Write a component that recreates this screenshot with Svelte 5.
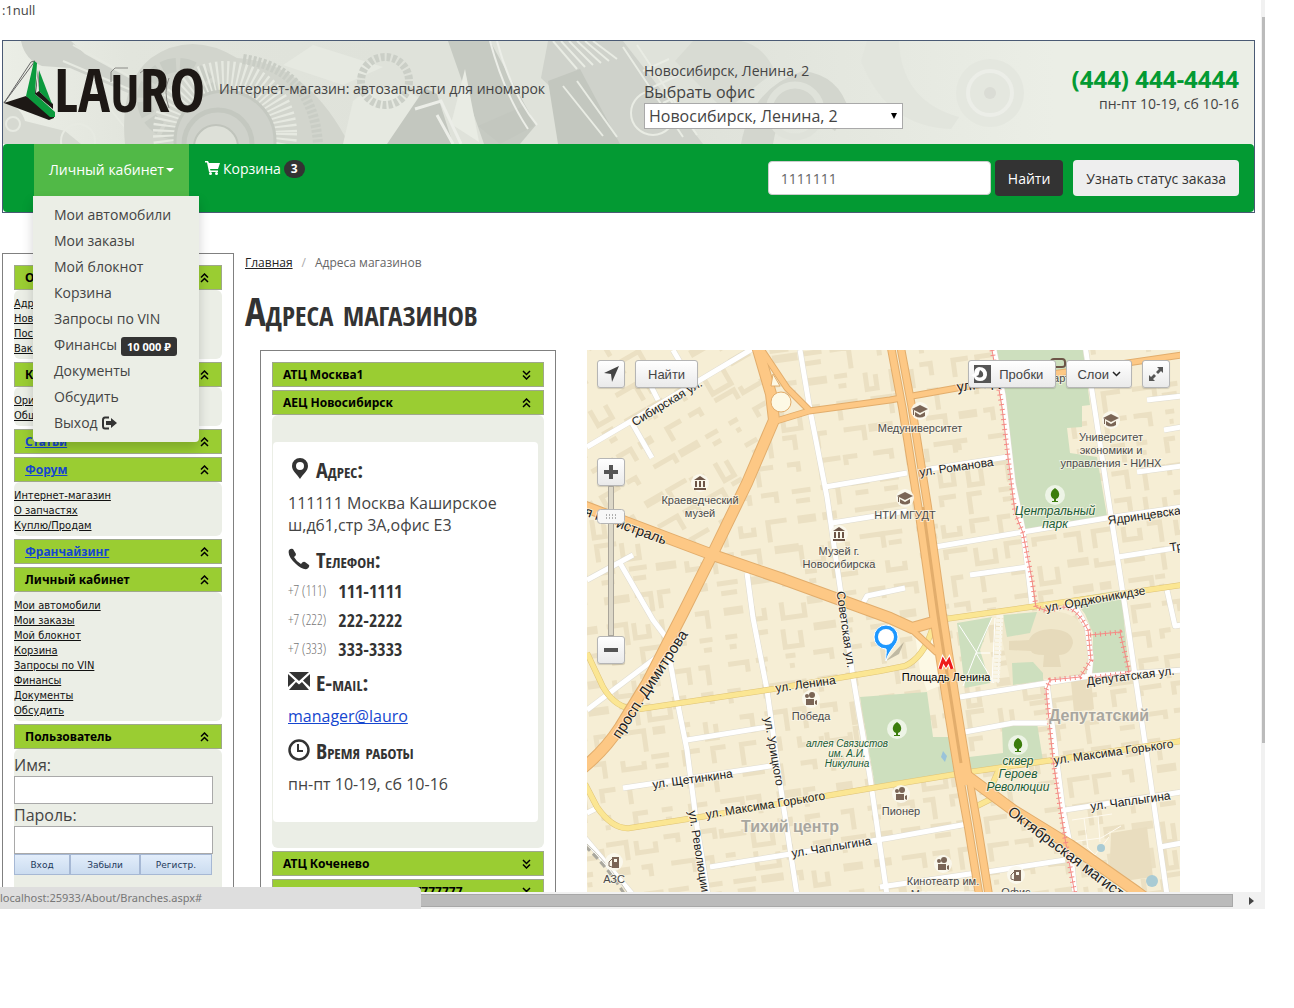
<script lang="ts">
    type Link = { title: string; isLink?: boolean; items: string[] };

    const cabinet: string[] = ["Мои автомобили", "Мои заказы", "Мой блокнот", "Корзина", "Запросы по VIN", "Финансы", "Документы", "Обсудить"];

    const sections: Link[] = [
        { title: "О компании", items: ["Адреса магазинов", "Новости", "Поставщикам", "Вакансии"] },
        { title: "Каталоги", items: ["Оригинальные", "Общий каталог"] },
        { title: "Статьи", isLink: true, items: [] },
        { title: "Форум", isLink: true, items: ["Интернет-магазин", "О запчастях", "Куплю/Продам"] },
        { title: "Франчайзинг", isLink: true, items: [] },
        { title: "Личный кабинет", items: cabinet },
    ];

    const phones = [
        ["+7 (111)", "111-1111"],
        ["+7 (222)", "222-2222"],
        ["+7 (333)", "333-3333"],
    ];

    const whiteRoads: string[] = [
        "M0 97L46 70L160 2L172-5", "M86 0L93 12", "M61 30L71 50", "M45 73L65 108",
        "M213 0L223 60L240 147L253 237L266 327L283 427L300 545",
        "M238 137L320 123", "M330 121L420 107", "M245 173L320 161", "M276 253L280 246L318 238",
        "M160 223L166 268L180 340L193 433L210 545", "M81 300L90 350L100 400L110 477L121 545",
        "M33 213L66 270L81 290", "M0 230L46 205", "M0 360L70 307", "M100 390L180 377", "M36 438L190 415",
        "M123 517L303 488L386 473", "M-4 486L46 545", "M0 463L12 457",
        "M407 0L416 45L426 133L436 180L445 255", "M498-5L520 140L540 270L560 407L580 545",
        "M348 197L436 182L520 168L595 157", "M383 225L440 217", "M531 207L595 197", "M560 50L595 46",
        "M577 80L595 77", "M550 122L595 116", "M580 240L588 276L595 275",
        "M373 347L460 333L503 326L595 320", "M378 382L426 373L460 373", "M460 333L476 460L483 493L488 545",
        "M478 460L595 442", "M393 523L478 510", "M573 497L595 493", "M293 537L396 522",
        "M478 256L490 260L500 277L504 308L502 326",
    ];

    const yellowRoads: string[] = [
        "M0 303L16 337Q30 361 53 359L180 340L293 321L318 316Q336 308 345 280",
        "M351 270L443 257L595 235",
        "M-2 434L10 457Q26 480 43 478L126 465L303 435L376 423L466 410L595 391",
        "M413 417L406 433", "M388 457L404 449",
    ];

    const orangeRoads: string[] = [
        "M170-4L184 44L187 70L160 133L126 203L96 263L60 333L33 377Q18 400-4 418",
        "M-4 156L126 205L193 228L303 268L325 278L346 272",
        "M376 423L426 460L483 495L550 542L593 574",
    ];

    const thinOrange: string[] = ["M172-4L200 38L222 60", "M186 72L222 61L303 50L370 38L595 5", "M322 277L350 303"];

    const parks: string[] = [
        "408,0 496,0 503,55 495,56 495,77 480,78 483,103 510,107 520,166 436,180",
        "273,347 340,342 346,387 366,387 371,423 288,436",
        "415,377 450,373 456,411 381,422 382,407 416,403",
        "370,273 405,267 393,300 403,333 378,338",
        "416,265 450,262 443,283 420,287", "425,313 446,312 456,323 456,331 426,335",
        "486,248 534,240 542,323 506,325 506,283 498,264",
    ];

    const tram: string[] = [
        "M405 0L415 57L421 107L428 163L436 183L445 230L449 257L460 261L476 257Q490 257 501 280L504 310L493 327L463 330L459 340L466 410L476 477L488 545",
        "M503 285L533 282L541 317L542 323L503 328",
    ];

    // [text, x, y, angle, size]
    const streets: [string, number, number, number, number][] = [
        ["Сибирская ул.", 82, 56, -31, 12],
        ["просп. Димитрова", 67, 337, -57, 15],
        ["я магистраль", 37, 180, 20, 14],
        ["ул. Ленина", 219, 338, -8, 12],
        ["Советская ул.", 255, 280, 82, 12],
        ["ул. Урицкого", 183, 402, 80, 12],
        ["ул. Революции", 108, 502, 81, 12],
        ["ул. Щетинкина", 106, 433, -8, 12],
        ["ул. Максима Горького", 179, 459, -9, 12],
        ["ул. Чаплыгина", 245, 501, -9, 12],
        ["ул. Романова", 370, 121, -8, 12],
        ["ул. Фрунзе", 405, 37, -8, 14],
        ["Ядринцевская", 561, 169, -8, 12],
        ["Трудовая", 609, 198, -8, 12],
        ["ул. Орджоникидзе", 509, 253, -10, 12],
        ["Депутатская ул.", 544, 330, -7, 12],
        ["ул. Максима Горького", 527, 406, -8, 12],
        ["ул. Чаплыгина", 544, 455, -8, 12],
        ["Октябрьская магистраль", 489, 516, 37, 15],
    ];

    // [icon, text lines, x, first baseline]
    const places: [string, string[], number, number][] = [
        ["museum", ["Краеведческий", "музей"], 113, 154],
        ["museum", ["Музей г.", "Новосибирска"], 252, 205],
        ["school", ["Медуниверситет"], 333, 82],
        ["school", ["НТИ МГУДТ"], 318, 169],
        ["school", ["Университет", "экономики и", "управления - НИНХ"], 524, 91],
        ["cinema", ["Победа"], 224, 370],
        ["cinema", ["Пионер"], 314, 465],
        ["cinema", ["Кинотеатр им.", "Маяковского"], 356, 535],
        ["fuel", ["АЗС"], 27, 533],
        ["fuel", ["Офис"], 429, 546],
    ];

    let seed = 11;
    const rnd = () => {
        seed = (seed * 1103515245 + 12345) % 2147483648;
        return seed / 2147483648;
    };

    // city blocks, L and U shaped outlines laid on a loose grid
    const makeBlocks = (x0: number, y0: number, x1: number, y1: number) => {
        let out = "";
        for (let y = y0; y < y1; y += 27) {
            for (let x = x0; x < x1; x += 29) {
                const w = 9 + Math.floor(rnd() * 15);
                const h = 7 + Math.floor(rnd() * 15);
                const px = x + Math.floor(rnd() * 7);
                const kind = rnd();
                out += kind < 0.3 ? `M${px} ${y}h${w}v${h}` : kind < 0.55 ? `M${px} ${y + h}v-${h}h${w}` : kind < 0.7 ? `M${px} ${y}v${h}h${w}v-${h - 3}` : kind < 0.85 ? `M${px} ${y}h${w}M${px + 3} ${y + 10}h${w - 5}` : `M${px} ${y}h${w}v3h-${w}`;
            }
        }
        return out;
    };

    const cityBlocks = makeBlocks(-80, -20, 700, 660);
    const oldBlocks = makeBlocks(-120, 0, 200, 260);

    let office = "Новосибирск, Ленина, 2";
    let query = "1111111";
    let login = "";
    let password = "";
</script>

{#snippet chevrons(down: boolean)}
    <svg class:down viewBox="0 0 9 10" width="9" height="10" aria-hidden="true">
        <path d="M1 4.500L4.500 1L8 4.500M1 9L4.500 5.500L8 9" fill="none" stroke="#000" stroke-width="1.500" />
    </svg>
{/snippet}

<div class="window">
    <div class="page">
        <div class="debug">:1null</div>

        <header>
            <div class="top">
                <svg class="parts" viewBox="0 0 1251 103" preserveAspectRatio="xMinYMin slice" aria-hidden="true">
                    <defs>
                        <linearGradient id="shade">
                            <stop offset="0" stop-color="#ebeee6" />
                            <stop offset="0.1" stop-color="#e2e5dd" />
                            <stop offset="0.3" stop-color="#dfe2da" />
                            <stop offset="0.55" stop-color="#dfe2da" />
                            <stop offset="0.84" stop-color="#ebeee6" />
                        </linearGradient>
                    </defs>
                    <rect width="1251" height="103" fill="url(#shade)" />
                    <!-- shaft and small bearings on the left -->
                    <path d="M18 0h50l14 13 62 34-5 11-72-31-28-2q-17-6-21-25z" fill="#cfd2cb" />
                    <path d="M70 4l72 40M60 20l80 34" stroke="#e6e9e1" stroke-width="2" />
                    <path d="M0 60q18 6 22 20l40 10 16 13H0z" fill="#d6d9d1" />
                    <g fill="none" stroke="#e7eae2" stroke-width="2">
                        <circle cx="10" cy="83" r="7" /><circle cx="75" cy="100" r="17" /><path d="M85 40l50 63" />
                    </g>
                    <!-- bevel gear -->
                    <path d="M122 103q-6-60 26-86q40-28 86 0q70 4 112 86z" fill="#d2d5cd" />
                    <circle cx="175" cy="58" r="34" fill="none" stroke="#c8ccc4" stroke-width="14" stroke-dasharray="14 4" />
                    <circle cx="222" cy="92" r="57" fill="none" stroke="#e6e9e1" stroke-width="30" stroke-dasharray="2 3" />
                    <circle cx="222" cy="100" r="50" fill="#cfd2cb" stroke="#c5c9c1" stroke-width="3" />
                    <circle cx="215" cy="103" r="34" fill="none" stroke="#c4c8c0" stroke-width="5" />
                    <circle cx="213" cy="106" r="22" fill="#dde0d8" stroke="#c0c4bc" stroke-width="2" />
                    <path d="M240 18q70 10 75 85" fill="none" stroke="#c9cdc5" stroke-width="10" stroke-dasharray="3 2" />
                    <!-- casing in the middle -->
                    <path d="M310 4l70 22-40 18-60-20zM350 60q30-30 90 10l-30 33h-70z" fill="#e6e9e1" />
                    <circle cx="382" cy="40" r="24" fill="none" stroke="#cbcfc7" stroke-width="8" stroke-dasharray="4 2" />
                    <path d="M445 0h42l46 84-16 19h-36z" fill="#c6cac2" />
                    <path d="M462 28l14 73-28-18z" fill="#e9ece4" />
                    <path d="M384 103l38-56 12 6 16 50zM475 85l46-20 10 20-34 18z" fill="#c3c7bf" />
                    <path d="M412 68l26-8 20 43M434 74l16 29" fill="none" stroke="#eceee8" stroke-width="3" />
                    <path d="M487 0q14 52 38 88M494 0q14 52 40 84" fill="none" stroke="#eceee8" stroke-width="2" />
                    <path d="M545 0h75l80 103h-92l-70-66z" fill="#cfd2cb" />
                    <path d="M545 40l32-12 40 75h-62z" fill="#c3c7bf" />
                    <g fill="none" stroke="#e9ece4" stroke-width="2">
                        <path d="M550 0l24 28M558 0l24 26M566 0l24 24M574 0l24 22M582 0l24 20M590 0l24 18" />
                        <path d="M620 6l60 90M634 4l60 90M560 45l40 50M574 40l40 56M640 30l26-12M650 46l26-12M660 62l26-12" />
                        <circle cx="650" cy="72" r="22" />
                    </g>
                    <path d="M690 0h48q22 4 34 30l-50 40-50-50z" fill="#d8dbd3" />
                    <path d="M738 103q10-56 62-73q36 4 46 40l-14 20-40-26q-16 4-22 39z" fill="#d3d6ce" />
                    <circle cx="792" cy="70" r="26" fill="none" stroke="#dfe2da" stroke-width="7" />
                    <path d="M858 20q26 66 90 68l8-12q-58-16-60-76h-32z" fill="#e2e5dd" />
                    <circle cx="987" cy="52" r="34" fill="#e4e7df" /><circle cx="987" cy="52" r="22" fill="none" stroke="#eceee8" stroke-width="4" />
                    <circle cx="987" cy="52" r="6" fill="#dadcd5" />
                </svg>
                <a class="logo" href="#home" aria-label="LAURO">
                    <svg viewBox="0 0 204 62" width="204" height="62">
                        <path d="M32 1L1 43M32 1L28 2L1 43" fill="none" stroke="#666" stroke-width="1" />
                        <path d="M1 43L23 36L51 54V58L46 60Z" fill="#1d1815" />
                        <path d="M31 1L34 3L32 34L52 52V57L47 57L23 36Z" fill="#0b9a3d" />
                        <path d="M32 34L35 10L37 32L50 44V49Z" fill="#1d1815" />
                        <path d="M33 33L35 10L36 31Z" fill="#ebeee6" />
                        <path d="M36 10L49 44L36 31Z" fill="#0b9a3d" />
                        <path d="M112 8h13M112 8l-4 4v10M141 10l-4 3M92 20l8 30M166 18q-6 14 0 30" fill="none" stroke="#8a8a86" stroke-width="1" />
                        <text class="logo-text" x="51" y="52">LA<tspan class="logo-u">U</tspan>RO</text>
                    </svg>
                </a>
                <span class="tagline">Интернет-магазин: автозапчасти для иномарок</span>
                <div class="office">
                    <span class="small">Новосибирск, Ленина, 2</span>
                    <label for="office">Выбрать офис</label>
                    <span class="select-wrap">
                        <select id="office" bind:value={office}>
                            <option>Новосибирск, Ленина, 2</option>
                        </select>
                        <svg viewBox="0 0 6 6" width="6" height="6" aria-hidden="true"><path d="M0 0h6L3 6z" /></svg>
                    </span>
                </div>
                <div class="contact">
                    <strong>(444) 444-4444</strong>
                    <span>пн-пт 10-19, сб 10-16</span>
                </div>
            </div>

            <nav>
                <div class="account">
                    <a class="account-link" href="#cabinet">Личный кабинет<i class="caret"></i></a>
                    <ul class="menu">
                        {#each cabinet as item}
                            <li>
                                <a href="#menu">{item}</a>
                                {#if item == "Финансы"}<span class="money">10 000 ₽</span>{/if}
                            </li>
                        {/each}
                        <li>
                            <a href="#logout">Выход<svg viewBox="0 0 16 14" width="16" height="14" aria-hidden="true">
                                    <path d="M8 1.500H4Q2 1.500 2 4V10Q2 12.500 4 12.500H8" fill="none" stroke="#333" stroke-width="2" />
                                    <path d="M5 5h5V2l6 5-6 5V9H5z" fill="#333" />
                                </svg>
                            </a>
                        </li>
                    </ul>
                </div>
                <a class="cart" href="#cart">
                    <svg viewBox="0 0 15 14" width="15" height="14" aria-hidden="true">
                        <path d="M0 0h3l1 2h11l-2 6H5l.5 1.500H13V11H4L2 1.500H0z" fill="#fff" />
                        <circle cx="5.500" cy="12.500" r="1.500" fill="#fff" /><circle cx="11.500" cy="12.500" r="1.500" fill="#fff" />
                    </svg>
                    <span>Корзина</span>
                    <span class="count">3</span>
                </a>
                <form on:submit|preventDefault>
                    <input type="text" aria-label="Поиск" bind:value={query}>
                    <button class="find">Найти</button>
                    <button class="status" type="button">Узнать статус заказа</button>
                </form>
            </nav>
        </header>

        <div class="columns">
            <aside class="box">
                {#each sections as section}
                    <div class="bar">
                        {#if section.isLink}<a href="#section">{section.title}</a>{:else}<span>{section.title}</span>{/if}
                        {@render chevrons(false)}
                    </div>
                    {#if section.items.length}
                        <ul class="links">
                            {#each section.items as item}
                                <li><a href="#item">{item}</a></li>
                            {/each}
                        </ul>
                    {/if}
                {/each}
                <div class="bar"><span>Пользователь</span>{@render chevrons(false)}</div>
                <form class="login" on:submit|preventDefault>
                    <label for="login">Имя:</label>
                    <input id="login" type="text" bind:value={login}>
                    <label for="password">Пароль:</label>
                    <input id="password" type="password" bind:value={password}>
                    <div class="login-buttons">
                        <button>Вход</button>
                        <button type="button">Забыли</button>
                        <button type="button">Регистр.</button>
                    </div>
                </form>
            </aside>

            <main>
                <div class="crumbs"><a href="#home">Главная</a><span class="slash">/</span><span>Адреса магазинов</span></div>
                <h1>Адреса магазинов</h1>
                <div class="shops">
                    <section class="box">
                        <div class="bar"><span>АТЦ Москва1</span>{@render chevrons(true)}</div>
                        <div class="bar"><span>АЕЦ Новосибирск</span>{@render chevrons(false)}</div>
                        <div class="shop">
                            <div class="card">
                                <h2>
                                    <svg viewBox="0 0 22 22" width="22" height="22" aria-hidden="true"><path d="M12 0a8 8 0 0 1 8 8c0 5-5 8-8 13C9 16 4 13 4 8a8 8 0 0 1 8-8zm0 4a4 4 0 1 0 0 8a4 4 0 0 0 0-8z" fill="#333" fill-rule="evenodd" /></svg>
                                    Адрес:
                                </h2>
                                <p>111111 Москва Каширское ш,д61,стр 3А,офис Е3</p>
                                <h2>
                                    <svg viewBox="0 0 22 22" width="22" height="22" aria-hidden="true"><path d="M1 2Q3 0 5 1L8 6Q8 8 6 9Q8 13 13 16Q15 13 17 14L21 17Q22 19 19 21Q14 22 8 16Q-1 8 1 2z" fill="#333" /></svg>
                                    Телефон:
                                </h2>
                                <ul class="phones">
                                    {#each phones as [code, number]}
                                        <li><span>{code}</span><b>{number}</b></li>
                                    {/each}
                                </ul>
                                <h2>
                                    <svg viewBox="0 0 22 22" width="22" height="22" aria-hidden="true"><path d="M1 1H21L11 10zM0 3L7 9.500L0 16zM22 3L15 9.500L22 16zM8 11L11 13.500L14 11L21 19H1z" fill="#333" /></svg>
                                    E-mail:
                                </h2>
                                <p><a href="mailto:manager@lauro">manager@lauro</a></p>
                                <h2>
                                    <svg viewBox="0 0 22 22" width="22" height="22" aria-hidden="true"><circle cx="11" cy="11" r="9.500" fill="none" stroke="#333" stroke-width="2.500" /><path d="M10 5v7h5" fill="none" stroke="#333" stroke-width="2" /></svg>
                                    Время работы
                                </h2>
                                <p>пн-пт 10-19, сб 10-16</p>
                            </div>
                        </div>
                        <div class="bar"><span>АТЦ Коченево</span>{@render chevrons(true)}</div>
                        <div class="bar"><span class="center">7777777</span>{@render chevrons(true)}</div>
                    </section>

                    <div class="map">
                        <svg class="tiles" viewBox="0 0 593 593" preserveAspectRatio="xMinYMin slice">
                            <defs>
                                <clipPath id="oldtown"><path d="M0 0H168L182 70L125 200L0 155z" /></clipPath>
                                <clipPath id="newtown"><path d="M0 157L125 203L186 72L175 0H593V593H0z" /></clipPath>
                            </defs>
                            <rect width="593" height="593" fill="#f6eed5" />
                            <g fill="none" stroke="#ebe0c3" stroke-width="5">
                                <g clip-path="url(#newtown)"><path d={cityBlocks} transform="rotate(-8)" /></g>
                                <g clip-path="url(#oldtown)"><path d={oldBlocks} transform="rotate(-30)" /></g>
                            </g>
                            <g fill="#e9ddbf">
                                <path d="M524 483l36-6 6 50-44 6z" />
                                <path d="M483 322l20-3 4 40-20 3z" />
                            </g>
                            <path d="M411 268l38-6q55-8 52 45l-3 16-40 6-34 6z" fill="#f0e7cb" />
                            {#each parks as points}
                                <polygon {points} fill="#cddfbe" />
                            {/each}
                            <path d="M422 291l20-1q4-10 22-11q22 1 22 14q-3 12-14 12l2 12h-18l1-12q-12 0-13-4l-22-1z" fill="#e6dabb" />
                            <path d="M328 284l22 6 5 45-15 6-7-20z" fill="#fdf9e5" />
                            <path d="M372 275l18 28h13M405 268l-16 35-13 33M389 303l18 30M408 268l-3 65M414 268l-3 65" stroke="#fff" stroke-width="1" fill="none" />
                            <path d="M413 265l-4 68" stroke="#f9f6ea" stroke-width="7" stroke-dasharray="3 1" />
                            <path d="M485 470l40-6M497 468l4 30M511 466l2 26M484 492l30-4l20-12M500 497l8 8l14-18" stroke="#fffbf0" fill="none" />
                            <circle cx="514" cy="498" r="4" fill="#a9cbd4" /><circle cx="565" cy="531" r="6" fill="#a9cbd4" />
                            <path d="M356 401l4 5-2 6-4-5z" fill="#9ac3d9" />
                            <g fill="none" stroke-linejoin="round">
                                {#each whiteRoads as d}<path {d} stroke="#dedbd0" stroke-width="6" />{/each}
                                {#each whiteRoads as d}<path {d} stroke="#fff" stroke-width="5" />{/each}
                                {#each yellowRoads as d}<path {d} stroke="#dfc376" stroke-width="6" />{/each}
                                {#each yellowRoads as d}<path {d} stroke="#fbe693" stroke-width="5" />{/each}
                                {#each orangeRoads as d}<path {d} stroke="#e2ad6c" stroke-width="12" />{/each}
                                {#each thinOrange as d}<path {d} stroke="#e2ad6c" stroke-width="7" />{/each}
                                <path d="M309-2L320 57L336 157L351 265L363 343L376 423L386 477L397 545" stroke="#e2ad6c" stroke-width="18" />
                                {#each orangeRoads as d}<path {d} stroke="#fdc885" stroke-width="10" />{/each}
                                {#each thinOrange as d}<path {d} stroke="#fdc885" stroke-width="5" />{/each}
                                <path d="M309-2L320 57L336 157L351 265L363 343L376 423L386 477L397 545" stroke="#fdc885" stroke-width="16" />
                                <path d="M309-2L320 57L336 157L351 265L363 343L374 413M379 435L386 477L397 545" stroke="#e2ad6c" stroke-width="3" />
                                <path d="M309-2L320 57L336 157M379 435L386 477L397 545" stroke="#f6eed5" stroke-width="1" />
                                {#each tram as d}
                                    <path {d} stroke="#f58a84" stroke-width="1" />
                                    <path {d} stroke="#f58a84" stroke-width="5" stroke-dasharray="1 4" />
                                {/each}
                                <path d="M-2 496Q20 516 38 545" stroke="#aaa89e" stroke-width="3" stroke-dasharray="7 4" />
                                <path d="M-2 492Q22 514 42 545" stroke="#c8c5b8" stroke-width="1" />
                            </g>
                            <path d="M186 24l7 12h-9z" fill="#fdf9e5" stroke="#e2ad6c" />
                            <circle cx="194" cy="52" r="10" fill="#fdf9e5" stroke="#e2ad6c" />

                            <g class="districts">
                                <text x="203" y="482">Тихий центр</text>
                                <text x="512" y="371">Депутатский</text>
                            </g>
                            <g class="streets">
                                {#each streets as [name, x, y, angle, size]}
                                    <text {x} {y} font-size={size} transform="rotate({angle} {x} {y})">{name}</text>
                                {/each}
                            </g>
                            {#each places as [kind, lines, x, y]}
                                <g transform="translate({x} {y - 21})">
                                    <circle r="9" fill="#fbf8ee" opacity="0.9" />
                                    {#if kind == "museum"}
                                        <path d="M-6-3L0-7L6-3zM-5-2h2v6h-2zM-1-2h2v6h-2zM3-2h2v6h-2zM-6 5H6v2H-6z" fill="#6d5547" />
                                    {:else if kind == "school"}
                                        <path d="M-8-2L0-6L8-2L0 2zM-5 1L0 4L5 1V5Q0 8-5 5zM-7-1h1v5h-1z" fill="#7a6556" />
                                    {:else if kind == "cinema"}
                                        <path d="M-5 0h8v6h-8zM4 2l2-1v5l-2-1z" fill="#7a6556" />
                                        <circle cx="-4" cy="-3" r="2" fill="#7a6556" /><circle cx="1" cy="-4" r="3" fill="#7a6556" />
                                    {:else}
                                        <path d="M-2-5h7V6h-7zM0-3v3h3v-3z" fill="#7a6556" fill-rule="evenodd" />
                                        <path d="M-2-3L-5 0v4l3 1" fill="none" stroke="#7a6556" />
                                    {/if}
                                </g>
                                <g class="places">
                                    {#each lines as line, i}<text {x} y={y + i * 13}>{line}</text>{/each}
                                </g>
                            {/each}
                            <path d="M464 16v-4q0-3 3-3h8q3 0 3 3v3q0 2-3 2h-8" fill="none" stroke="#6d5547" stroke-width="2" />
                            <text class="poi" x="470" y="32">Март</text>
                            {#each [[468, 145], [310, 379], [431, 395]] as [x, y]}
                                <g transform="translate({x} {y})">
                                    <circle r="10" fill="#edf4e6" />
                                    <path d="M0-7Q5-4 4 1Q3 4 1 4V6H3V7H-3V6H-1V4Q-3 4-4 1Q-5-4 0-7z" fill="#3c7d0d" />
                                </g>
                            {/each}
                            <g class="green">
                                <text x="468" y="165">Центральный</text><text x="468" y="178">парк</text>
                                <text x="431" y="415">сквер</text><text x="431" y="428">Героев</text><text x="431" y="441">Революции</text>
                            </g>
                            <g class="green alley">
                                <text x="260" y="397">аллея Связистов</text><text x="260" y="407">им. А.И.</text><text x="260" y="417">Никулина</text>
                            </g>
                            <path d="M353 319l3-9 3 5 3-5 3 9" fill="none" stroke="#fff" stroke-width="5" />
                            <path d="M353 319l3-9 3 5 3-5 3 9" fill="none" stroke="#ee1c1c" stroke-width="3" />
                            <text class="metro" x="359" y="331">Площадь Ленина</text>
                            <path d="M299 311L317 292L312 304z" fill="#6f6a58" opacity="0.4" />
                            <path d="M299 275a12 12 0 0 1 12 12c0 8-9 12-12 24c-1-4 1-9 0-12a12 12 0 0 1 0-24z" fill="#1e98ff" stroke="#fff" stroke-width="1" />
                            <circle cx="299" cy="287" r="8" fill="#fff" />
                        </svg>
                        <div class="tools">
                            <button class="square" aria-label="Моё местоположение"><svg viewBox="0 0 16 16" width="16" height="16"><path d="M1 7L16 0L9 16L8 8z" fill="#444" /></svg></button>
                            <button>Найти</button>
                            <button class="jams">
                                <svg viewBox="0 0 20 18" width="20" height="18" aria-hidden="true"><path d="M3 0h17v18H3z" fill="#555" /><path d="M8 2Q16 2 16 10Q15 16 9 16Q4 16 3 12L0 10L3 9Q3 3 8 2z" fill="#fff" /><path d="M9 5Q13 7 12 11Q9 14 5 11Q8 11 8 8z" fill="#555" /></svg>
                                Пробки
                            </button>
                            <button class="layers">Слои <svg viewBox="0 0 9 6" width="9" height="6" aria-hidden="true"><path d="M1 1l3.500 3.500L8 1" fill="none" stroke="#222" stroke-width="1.500" /></svg></button>
                            <button class="square" aria-label="На весь экран"><svg viewBox="0 0 14 14" width="14" height="14"><path d="M14 0v6l-2-2-3 3-2-2 3-3-2-2zM0 14v-6l2 2 3-3 2 2-3 3 2 2z" fill="#555" /></svg></button>
                        </div>
                        <div class="zoom">
                            <button class="square" aria-label="Приблизить"><svg viewBox="0 0 14 14" width="14" height="14"><path d="M5 0h4v5h5v4H9v5H5V9H0V5h5z" fill="#555" /></svg></button>
                            <div class="rail">
                                <svg class="grip" viewBox="0 0 28 15" width="28" height="15" aria-hidden="true">
                                    <rect x="0.500" y="0.500" width="27" height="14" rx="3" fill="#f7f7f7" stroke="#b5b5b5" />
                                    <path d="M9 6h12M9 9h12" stroke="#666" stroke-dasharray="1 2" />
                                </svg>
                            </div>
                            <button class="square" aria-label="Отдалить"><svg viewBox="0 0 14 14" width="14" height="14"><path d="M0 5h14v4H0z" fill="#555" /></svg></button>
                        </div>
                    </div>
                </div>
            </main>
        </div>
    </div>

    <div class="vscroll"><span></span></div>
    <div class="hscroll">
        <span class="thumb"></span>
        <svg viewBox="0 0 5 8" width="5" height="8" aria-hidden="true"><path d="M0 0L5 4L0 8z" fill="#444" /></svg>
    </div>
    <div class="statusbar">localhost:25933/About/Branches.aspx#</div>
</div>

<style>
    :global(body) {
        background: white;
        overflow: hidden;
    }

    .window {
        position: relative;
        display: grid;
        grid-template-columns: 1fr 4px;
        grid-template-rows: 1fr 17px;
        height: calc(100vh - 99px);
        margin-right: 29px;
        overflow: hidden;
        color: #444;
        font: 400 16px/22px "Open Sans", "Noto Sans", sans-serif;
    }

    .page {
        min-width: 0;
        padding: 0 6px 0 2px;
        overflow: hidden;
    }

    .debug {
        height: 40px;
        font-size: 13px;
        line-height: 20px;
    }

    ul {
        margin: 0;
        padding: 0;
        list-style: none;
    }

    button, input, select {
        box-sizing: border-box;
        font-family: inherit;
    }

    header {
        border: 1px solid #4a5a74;
    }

    .top {
        position: relative;
        display: grid;
        grid-template-columns: 216px 425px 1fr auto;
        height: 103px;
        background: #ebeee6;
    }

    .top > :not(.parts) {
        position: relative;
    }

    .parts {
        position: absolute;
        width: 100%;
        height: 100%;
    }

    .logo {
        padding-top: 19px;
    }

    .logo-text {
        font: 700 60px "Open Sans Condensed", "Liberation Sans Narrow", "Open Sans", sans-serif;
        fill: #1d1815;
    }

    .logo-u {
        font-size: 52px;
    }

    .tagline {
        padding-top: 38px;
        font-size: 14px;
        line-height: 20px;
    }

    .office {
        display: flex;
        flex-direction: column;
        align-items: flex-start;
        padding-top: 20px;
    }

    .small {
        font-size: 14px;
        line-height: 20px;
    }

    .select-wrap {
        position: relative;
    }

    .select-wrap svg {
        position: absolute;
        right: 6px;
        top: 10px;
    }

    select {
        appearance: none;
        display: block;
        width: 259px;
        height: 26px;
        padding: 0 4px;
        border: 1px solid #a9a9a9;
        background: white;
        color: #444;
        font-size: 16px;
    }

    .contact {
        display: flex;
        flex-direction: column;
        padding: 24px 15px 0 0;
        text-align: right;
        font-size: 14px;
    }

    .contact strong {
        color: #039a33;
        font-size: 24px;
        line-height: 28px;
        font-weight: 700;
    }

    nav {
        display: flex;
        height: 68px;
        padding: 0 15px 0 31px;
        border-radius: 4px;
        background: #039a33;
        font-size: 14px;
    }

    .account {
        position: relative;
    }

    .account-link {
        display: flex;
        align-items: center;
        gap: 2px;
        height: 52px;
        padding: 0 15px;
        background: #51b947;
        color: white;
        text-decoration: none;
    }

    .caret {
        border: 4px solid transparent;
        border-top-color: white;
        border-bottom: 0;
    }

    .menu {
        position: absolute;
        z-index: 5;
        top: 52px;
        left: -1px;
        width: 166px;
        box-sizing: border-box;
        padding: 6px 0 6px 21px;
        border-radius: 0 0 4px 4px;
        background: #ebeee6;
        box-shadow: 0 6px 12px rgba(0, 0, 0, .18);
        white-space: nowrap;
    }

    .menu li {
        display: flex;
        align-items: center;
        gap: 4px;
        height: 26px;
    }

    .menu a {
        color: #444;
        text-decoration: none;
    }

    .menu svg {
        margin-left: 3px;
        vertical-align: -2px;
    }

    .money {
        margin-top: 2px;
        padding: 0 6px;
        border-radius: 3px;
        background: #333;
        color: white;
        font-size: 11px;
        line-height: 19px;
        font-weight: 700;
    }

    .cart {
        display: flex;
        align-items: center;
        gap: 3px;
        height: 50px;
        padding-left: 16px;
        color: white;
        text-decoration: none;
    }

    .cart svg {
        margin-bottom: 3px;
    }

    .count {
        padding: 0 7px;
        border-radius: 10px;
        background: #333;
        font-size: 12px;
        line-height: 18px;
        font-weight: 700;
    }

    nav form {
        display: flex;
        align-items: center;
        height: 36px;
        margin: 16px 0 0 auto;
    }

    nav input {
        width: 223px;
        height: 34px;
        padding: 0 12px;
        border: 1px solid #ccc;
        border-radius: 4px;
        color: #666;
        font-size: 14px;
    }

    nav button {
        height: 36px;
        border: 0;
        border-radius: 4px;
        padding: 0 13px;
        font-size: 14px;
    }

    .find {
        margin: 0 10px 0 4px;
        background: #333;
        color: white;
    }

    .status {
        background: #eee;
        color: #333;
    }

    .columns {
        display: grid;
        grid-template-columns: 232px 1fr;
        gap: 11px;
        margin-top: 40px;
    }

    .box {
        padding: 11px;
        border: 1px solid #808080;
    }

    .bar {
        display: flex;
        align-items: center;
        justify-content: space-between;
        box-sizing: border-box;
        height: 25px;
        margin-bottom: 3px;
        padding: 0 12px 0 10px;
        border: 1px solid #9fa88c;
        background: #9acd32;
        color: black;
        font: 700 12px "Noto Sans", "Open Sans", sans-serif;
    }

    .bar a {
        color: #1546cf;
    }

    .center {
        flex: 1;
        text-align: center;
        padding-left: 72px;
    }

    .down {
        transform: rotate(180deg);
    }

    .links, .login, .shop {
        margin: -3px 0 3px;
        border-radius: 6px;
        background: #ebeee6;
    }

    .links {
        padding: 6px 0 3px;
        font: 400 11px/15px "DejaVu Sans Condensed", "Noto Sans", sans-serif;
    }

    .links a {
        color: #111;
    }

    .login {
        padding: 5px 0 40px;
    }

    .login label {
        display: block;
    }

    .login input {
        display: block;
        width: 199px;
        height: 28px;
        border: 1px solid #a9a9a9;
        background: white;
    }

    .login-buttons {
        display: grid;
        grid-template-columns: 56px 70px 72px;
    }

    .login-buttons button {
        height: 21px;
        padding: 0;
        border: 1px solid #a6b8d4;
        background: linear-gradient(#e2edfa, #cbdcf0);
        color: #1e395b;
        font: 400 9px "DejaVu Sans", sans-serif;
    }

    .crumbs {
        color: #666;
        font-size: 12px;
        line-height: 20px;
    }

    .crumbs a {
        color: #222;
    }

    .slash {
        padding: 0 9px;
        color: #aaa;
    }

    h1, h2, .phones {
        color: #333;
        font-family: "Open Sans Condensed", "Liberation Sans Narrow", "Open Sans", sans-serif;
    }

    h1, h2 {
        font-weight: 700;
        font-variant: small-caps;
    }

    h1 {
        margin: 18px 0 19px;
        font-size: 39px;
        line-height: 40px;
    }

    .shops {
        display: grid;
        grid-template-columns: 296px 1fr;
        gap: 31px;
        padding: 0 75px 0 15px;
    }

    .shops .box {
        box-sizing: border-box;
    }

    .shop {
        padding: 27px 6px 26px 1px;
    }

    .card {
        padding: 12px 15px 27px;
        border-radius: 4px;
        background: white;
    }

    h2 {
        display: flex;
        align-items: center;
        gap: 6px;
        margin: 0;
        font-size: 22px;
        line-height: 30px;
    }

    p + h2, ul + h2 {
        margin-top: 8px;
    }

    p {
        margin: 8px 0 0;
    }

    p a {
        color: #1546cf;
    }

    .phones {
        display: grid;
        gap: 9px;
        margin-top: 7px;
        font-size: 18px;
        line-height: 20px;
    }

    .phones li {
        display: flex;
        align-items: center;
        gap: 12px;
        height: 20px;
    }

    .phones span {
        color: #777;
        font-family: "Open Sans Condensed Light", "Open Sans Condensed", "Liberation Sans Narrow", sans-serif;
        font-size: 14px;
        font-weight: 300;
    }

    .map {
        position: relative;
    }

    .tiles {
        display: block;
        width: 100%;
        height: 593px;
        font-family: "Liberation Sans", Arial, sans-serif;
        text-anchor: middle;
    }

    .tiles text {
        paint-order: stroke;
        stroke: #fbf7ea;
        stroke-width: 2;
        stroke-opacity: .7;
    }

    .streets text {
        fill: #222;
    }

    .districts text {
        fill: #a8a69f;
        font-size: 16px;
        font-weight: 700;
    }

    .places text, .poi {
        fill: #4b4b4b;
        font-size: 11px;
    }

    .green text {
        fill: #1a5c37;
        font-size: 12px;
        font-style: italic;
    }

    .alley text {
        font-size: 10px;
    }

    .tiles .metro {
        fill: black;
        font-size: 11px;
    }

    .tools {
        position: absolute;
        top: 10px;
        left: 10px;
        right: 10px;
        display: flex;
        gap: 10px;
    }

    .map button {
        display: flex;
        align-items: center;
        justify-content: center;
        gap: 4px;
        height: 28px;
        padding: 0 12px;
        border: 1px solid #b5b5b5;
        border-radius: 3px;
        background: linear-gradient(#fff, #eaeaea);
        color: #444;
        font: 400 13px "Liberation Sans", Arial, sans-serif;
        box-shadow: 0 1px 1px rgba(0, 0, 0, .15);
    }

    .map .square {
        width: 28px;
        padding: 0;
    }

    .map .jams {
        gap: 8px;
        margin-left: auto;
        padding-left: 2px;
    }

    .map .layers {
        gap: 3px;
        padding: 0 10px;
    }

    .zoom {
        position: absolute;
        top: 108px;
        left: 10px;
    }

    .rail {
        position: relative;
        box-sizing: border-box;
        width: 6px;
        height: 150px;
        margin: 0 auto;
        border: 1px solid #aaa59a;
        background: #ddd8c8;
    }

    .grip {
        position: absolute;
        top: 22px;
        left: -12px;
    }

    .vscroll {
        padding-top: 17px;
        background: #f1f1f1;
    }

    .vscroll span {
        display: block;
        height: 83%;
        margin-left: 1px;
        background: #bbb;
    }

    .hscroll {
        grid-column: 1 / 3;
        display: flex;
        align-items: center;
        gap: 16px;
        padding-right: 11px;
        background: #f1f1f1;
    }

    .thumb {
        flex: 1;
        box-sizing: border-box;
        height: 13px;
        border: 1px solid #a8a8a8;
        background: #bbb;
    }

    .statusbar {
        position: absolute;
        bottom: 0;
        left: 0;
        box-sizing: border-box;
        width: 421px;
        height: 22px;
        border-radius: 0 4px 0 0;
        background: #dedede;
        color: #777;
        font: 400 11px/22px "Noto Sans", sans-serif;
    }
</style>
